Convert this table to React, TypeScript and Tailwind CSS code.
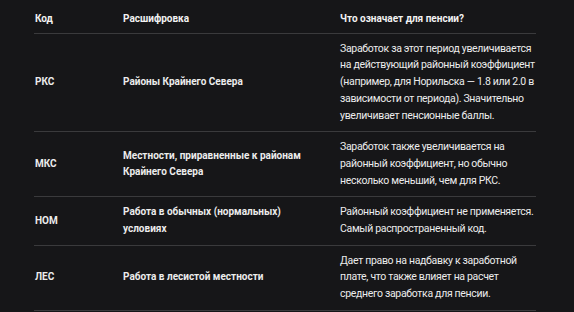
import React from "react";

type Row = { code: string; name: string; note: string };

const rows: Row[] = [
  {
    code: "РКС",
    name: "Районы Крайнего Севера",
    note: "Заработок за этот период увеличивается на действующий районный коэффициент (например, для Норильска — 1.8 или 2.0 в зависимости от периода). Значительно увеличивает пенсионные баллы.",
  },
  {
    code: "МКС",
    name: "Местности, приравненные к районам Крайнего Севера",
    note: "Заработок также увеличивается на районный коэффициент, но обычно несколько меньший, чем для РКС.",
  },
  {
    code: "НОМ",
    name: "Работа в обычных (нормальных) условиях",
    note: "Районный коэффициент не применяется. Самый распространенный код.",
  },
  {
    code: "ЛЕС",
    name: "Работа в лесистой местности",
    note: "Дает право на надбавку к заработной плате, что также влияет на расчет среднего заработка для пенсии.",
  },
];

const App: React.FC = () => {
  return (
    <div className="w-[574px] h-[312px] overflow-hidden bg-[#161618] text-[#ececec] font-['Roboto',sans-serif] text-[10.5px] leading-[16.7px]">
      <div className="ml-[34px] w-[502px]">
        <div className="grid grid-cols-[89px_217px_196px] border-b border-[#3a3a3c] pt-[11px] pb-[5px] text-[10px] font-bold text-[#f2f2f2]">
          <div className="pl-px">Код</div>
          <div>Расшифровка</div>
          <div>Что означает для пенсии?</div>
        </div>
        {rows.map((r) => (
          <div
            key={r.code}
            className="grid grid-cols-[89px_217px_196px] items-center border-b border-[#3a3a3c] py-[7px]"
          >
            <div className="pl-px text-[10px] font-bold">{r.code}</div>
            <div className="pr-[30px] text-[10px] font-bold">{r.name}</div>
            <div className="tracking-[-0.32px]">{r.note}</div>
          </div>
        ))}
      </div>
    </div>
  );
};

export default App;
